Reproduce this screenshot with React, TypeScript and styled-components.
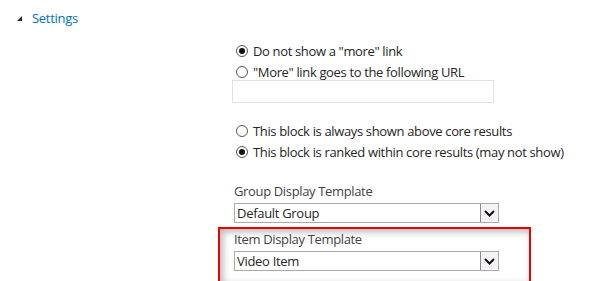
import { createGlobalStyle } from "styled-components";
import styled from "styled-components";

const GlobalStyle = createGlobalStyle`
  html, body {
    margin: 0;
    padding: 0;
    background: #fff;
  }
  body {
    font-family: "Open Sans", "Liberation Sans", sans-serif;
    font-size: 13px;
    color: #444;
  }
`;

const Page = styled.div`
  width: 602px;
  height: 281px;
  overflow: hidden;
`;

const Header = styled.div`
  display: flex;
  align-items: center;
  gap: 10px;
  height: 20px;
  padding: 8px 0 0 17px;
`;

const Arrow = styled.span`
  width: 0;
  height: 0;
  border-left: 5px solid transparent;
  border-bottom: 5px solid #262626;
`;

const HeaderText = styled.span`
  color: #0072c6;
  font-size: 13px;
  letter-spacing: -0.3px;
`;

const Column = styled.div`
  margin-left: 234px;
  display: flex;
  flex-direction: column;
`;

const RadioGroup = styled.div<{ $top: number }>`
  display: flex;
  flex-direction: column;
  margin-top: ${(p) => p.$top}px;
`;

const RadioRow = styled.label`
  display: flex;
  align-items: center;
  gap: 5px;
  height: 21px;
  color: #262626;
  white-space: nowrap;
  letter-spacing: -0.35px;
`;

const Radio = styled.span<{ $checked?: boolean }>`
  box-sizing: border-box;
  width: 12px;
  height: 12px;
  margin-left: 2px;
  border-radius: 50%;
  border: 1px solid #555;
  display: flex;
  align-items: center;
  justify-content: center;
  &::after {
    content: "";
    width: 6px;
    height: 6px;
    border-radius: 50%;
    background: ${(p) => (p.$checked ? "#111" : "transparent")};
  }
`;

const TextBox = styled.div`
  box-sizing: border-box;
  width: 262px;
  height: 23px;
  margin-left: -2px;
  margin-top: -2px;
  border: 1px solid #e1e1e1;
  background: #fff;
`;

const Label = styled.div<{ $top?: number }>`
  height: 20px;
  line-height: 20px;
  margin-top: ${(p) => p.$top ?? 0}px;
  color: #444;
  white-space: nowrap;
  letter-spacing: -0.35px;
`;

const Select = styled.div`
  box-sizing: border-box;
  width: 265px;
  height: 20px;
  border: 1px solid #ababab;
  background: #fff;
  display: flex;
  align-items: stretch;
  margin-top: 2px;
`;

const SelectValue = styled.span`
  flex: 1;
  padding-left: 2px;
  line-height: 18px;
  color: #262626;
  letter-spacing: -0.3px;
`;

const SelectButton = styled.span`
  box-sizing: border-box;
  width: 18px;
  border-left: 1px solid #8a8a8a;
  background: #f4f2f4;
  display: flex;
  align-items: center;
  justify-content: center;
`;

const Highlight = styled.div`
  box-sizing: border-box;
  width: 313px;
  height: 56px;
  margin-left: -16px;
  margin-top: 4px;
  padding: 0 0 0 14px;
  border: 2px solid #ee0000;
  box-shadow: inset 3px 3px 7px rgba(0, 0, 0, 0.28);
`;

const Chevron = () => (
  <svg width="11" height="7" viewBox="0 0 11 7">
    <path d="M1 1 L5.5 5.5 L10 1" fill="none" stroke="#111" strokeWidth="2" />
  </svg>
);

const Dropdown = ({ value }: { value: string }) => (
  <Select>
    <SelectValue>{value}</SelectValue>
    <SelectButton>
      <Chevron />
    </SelectButton>
  </Select>
);

const App = () => {
  return (
    <Page>
      <GlobalStyle />
      <Header>
        <Arrow />
        <HeaderText>Settings</HeaderText>
      </Header>
      <Column>
        <RadioGroup $top={12}>
          <RadioRow>
            <Radio $checked />
            Do not show a "more" link
          </RadioRow>
          <RadioRow>
            <Radio />
            "More" link goes to the following URL
          </RadioRow>
        </RadioGroup>
        <TextBox />
        <RadioGroup $top={17}>
          <RadioRow>
            <Radio />
            This block is always shown above core results
          </RadioRow>
          <RadioRow>
            <Radio $checked />
            This block is ranked within core results (may not show)
          </RadioRow>
        </RadioGroup>
        <Label $top={19}>Group Display Template</Label>
        <Dropdown value="Default Group" />
        <Highlight>
          <Label>Item Display Template</Label>
          <Dropdown value="Video Item" />
        </Highlight>
      </Column>
    </Page>
  );
};

export default App;
